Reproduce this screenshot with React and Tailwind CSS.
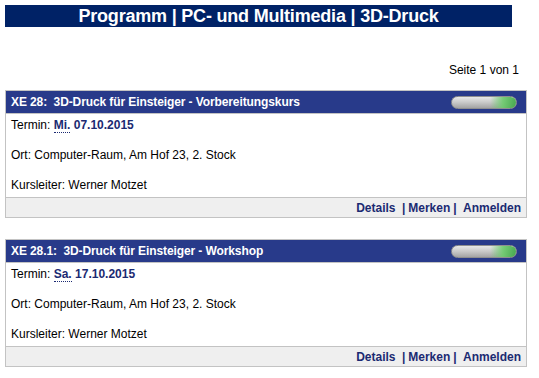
import React from "react";

const courses = [
  { nr: "XE 28", title: "3D-Druck für Einsteiger - Vorbereitungskurs", day: "Mi.", dayLong: "Mittwoch", date: "07.10.2015" },
  { nr: "XE 28.1", title: "3D-Druck für Einsteiger - Workshop", day: "Sa.", dayLong: "Samstag", date: "17.10.2015" },
];

// Status pill: gray bar fading into a green end
const StatusBar = () => (
  <div className="relative w-[66px] h-[13px] rounded-full border border-[#8f8f8f] bg-gradient-to-b from-[#e8e8e8] via-[#c8c8c8] to-[#a4a4a4] overflow-hidden">
    <div className="absolute right-0 top-0 w-[26px] h-full bg-gradient-to-r from-transparent via-[#6ccb6c] to-[#3aa844] opacity-90" />
  </div>
);

const CourseCard = ({ course }) => (
  <div className="w-[522px] border border-[#c3c3c3] mb-[21px]">
    <div className="h-[23px] bg-[#283a8a] flex items-center justify-between pl-[5px] pr-[9px] border-b border-[#c3c3c3]">
      <span className="text-white font-bold text-[12px] tracking-[-0.1px]">
        {course.nr}:&nbsp; {course.title}
      </span>
      <StatusBar />
    </div>
    <div className="px-[5px] pt-[4px] pb-[4px] flex flex-col gap-[15px] text-[12px] leading-[15px] text-black">
      <p>
        Termin:{" "}
        <abbr title={course.dayLong} className="font-bold text-[#1b2a72] no-underline border-b border-dotted border-[#1b2a72]">
          {course.day}
        </abbr>{" "}
        <span className="font-bold text-[#1b2a72]">{course.date}</span>
      </p>
      <p>Ort: Computer-Raum, Am Hof 23, 2. Stock</p>
      <p>Kursleiter: Werner Motzet</p>
    </div>
    <div className="h-[20px] bg-[#efefef] border-t border-[#c3c3c3] flex items-center justify-end pr-[5px] text-[12px] font-bold text-[#1b2a72]">
      <a href="#">Details</a>
      <span className="mx-[3px]">&nbsp;|</span>
      <a href="#">Merken</a>
      <span className="mx-[3px]">|&nbsp;</span>
      <a href="#">Anmelden</a>
    </div>
  </div>
);

export default function App() {
  return (
    <div className="w-[539px] h-[378px] bg-white font-['Liberation_Sans',Arial,sans-serif] pt-[5px] pl-[5px]">
      <div className="w-[507px] h-[22px] bg-[#002266] flex items-center justify-center">
        <h1 className="text-white font-bold text-[18px] leading-[22px] tracking-[-0.2px]">
          Programm | PC- und Multimedia | 3D-Druck
        </h1>
      </div>
      <div className="w-[522px] flex justify-end text-[12px] pt-[36px] pb-[12px] pr-[8px] leading-[15px]">
        Seite 1 von 1
      </div>
      {courses.map((c) => (
        <CourseCard key={c.nr} course={c} />
      ))}
    </div>
  );
}
